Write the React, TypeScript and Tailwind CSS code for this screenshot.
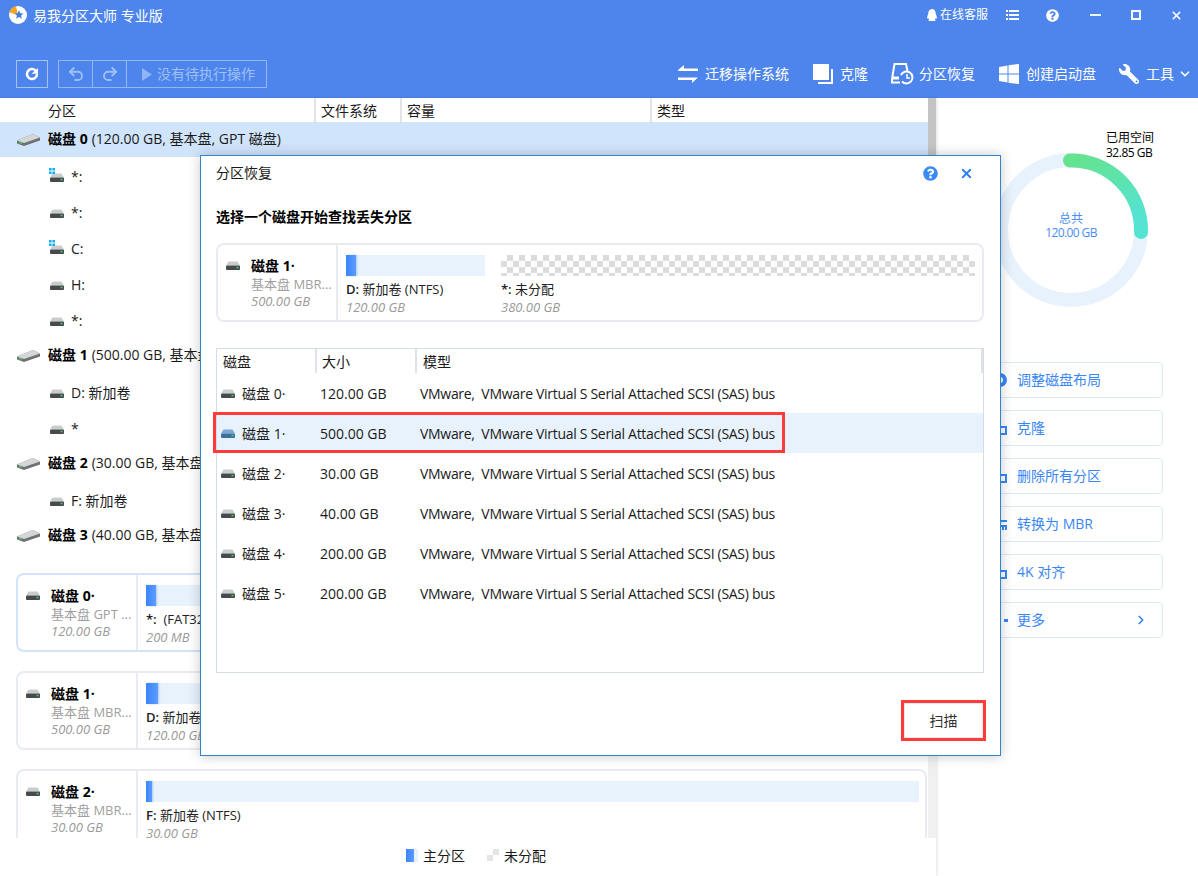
import { FaQq, FaQuestionCircle, FaWrench } from "react-icons/fa";
import { Undo2, Redo2, ChevronDown, ChevronRight, X } from "lucide-react";

type Part = { label: string; rest: string; size: string; width: number; used?: number };

const partitions0 = [
  { name: "*:", win: true },
  { name: "*:" },
  { name: "C:", win: true },
  { name: "H:" },
  { name: "*:" },
];

const dialogDisks = [
  { name: "磁盘 0·", size: "120.00 GB" },
  { name: "磁盘 1·", size: "500.00 GB", selected: true },
  { name: "磁盘 2·", size: "30.00 GB" },
  { name: "磁盘 3·", size: "40.00 GB" },
  { name: "磁盘 4·", size: "200.00 GB" },
  { name: "磁盘 5·", size: "200.00 GB" },
];

function HddIcon({ blue }: { blue?: boolean }) {
  return (
    <svg width="14" height="9" viewBox="0 0 14 10" preserveAspectRatio="none" className="shrink-0">
      <path d="M2.5 0.5h9L14 5H0z" fill={blue ? "#7ba9d6" : "#c9cdd0"} />
      <rect x="0" y="5" width="14" height="5" rx="1" fill={blue ? "#3c6f9e" : "#474a4c"} />
      <rect x="10.5" y="6.5" width="2" height="1.6" fill="#3fdc5a" />
    </svg>
  );
}

function BigDisk() {
  return (
    <svg width="24" height="14" viewBox="0 0 24 14" className="shrink-0">
      <path d="M0 7.5L16 1l7 3.5v3L7 13 0 10.5z" fill="#6f7274" />
      <path d="M0 7.5L16 1l7 3.5L7 10z" fill="#d4d6d8" />
      <rect x="2" y="9" width="3" height="1.5" fill="#49c35f" />
    </svg>
  );
}

function WinBadge() {
  return (
    <svg width="6" height="6" viewBox="0 0 6 6" className="absolute -left-[1px] -top-[5px]">
      <path d="M0 0h2.600v2.600H0zM3.400 0H6v2.600H3.400zM0 3.400h2.600V6H0zM3.400 3.400H6V6H3.400z" fill="#12b0f5" />
    </svg>
  );
}

function DiskRow({ name, info }: { name: string; info: string }) {
  return (
    <div className="ml-4 h-[35px] flex items-center text-[14px] text-[#1a1a1a]">
      <span className="w-8 pl-[1px] flex">
        <BigDisk />
      </span>
      <b className="font-bold text-black pb-[2px]">{name}</b>
      <span className="ml-1 pb-[2px]">{info}</span>
    </div>
  );
}

function PartRow({ name, win }: { name: string; win?: boolean }) {
  return (
    <div className="h-9 flex items-center pl-[50px] text-[14px] text-[#1a1a1a]">
      <span className="relative flex mt-[3px]">
        <HddIcon />
        {win && <WinBadge />}
      </span>
      <span className="ml-[7px]">{name}</span>
    </div>
  );
}

function DiskCard({
  name,
  type,
  size,
  parts,
  active,
  className,
}: {
  name: string;
  type: string;
  size: string;
  parts: Part[];
  active?: boolean;
  className?: string;
}) {
  return (
    <div
      className={`h-[79px] shrink-0 flex rounded-lg border-2 bg-white ${active ? "border-[#d3e3fb]" : "border-[#e8ecf1]"} ${className ?? ""}`}
    >
      <div className="w-[120px] shrink-0 border-r-2 border-[#e8ecf1] pt-3 pl-[8px] flex">
        <div className="pt-[4px] w-[25px]">
          <HddIcon />
        </div>
        <div>
          <div className="h-[18px] leading-[18px] text-[14px] font-bold text-black whitespace-nowrap">{name}</div>
          <div className="h-[18px] leading-[18px] text-[13px] text-[#a0a0a0] whitespace-nowrap">{type}</div>
          <div className="h-[17px] leading-[16px] text-[13px] italic text-[#9a9a9a] whitespace-nowrap">{size}</div>
        </div>
      </div>
      <div className="flex-1 flex gap-4 pl-[8px] pt-[10px]">
        {parts.map((p) => (
          <div key={p.label + p.rest} className="shrink-0" style={{ width: p.width }}>
            {p.used === undefined ? (
              <div className="h-[21px] bg-[repeating-conic-gradient(#dcdcdc_0_25%,#ffffff_0_50%)] bg-[length:12px_12px]" />
            ) : (
              <div className="h-[21px] bg-[#e8f2fd]">
                <div
                  className="h-full bg-gradient-to-r from-[#3a84fb] to-[#5b9cff] shadow-[1px_0_2px_rgba(60,120,220,0.35)]"
                  style={{ width: p.used }}
                />
              </div>
            )}
            <div className="mt-[4px] h-[18px] leading-[18px] text-[13px] text-[#222] whitespace-pre">
              <span className="font-semibold">{p.label}</span>
              {p.rest}
            </div>
            <div className="h-[18px] leading-[18px] text-[13px] italic text-[#9a9a9a]">{p.size}</div>
          </div>
        ))}
      </div>
    </div>
  );
}

function Header() {
  return (
    <div className="h-[98px] shrink-0 bg-[#4e85ec] text-white flex flex-col">
      <div className="h-[30px] flex items-center">
        <svg width="18" height="18" viewBox="0 0 18 18" className="ml-[9px]">
          <circle cx="9" cy="9" r="9" fill="#fff" />
          <path d="M9 9L0.3 6.5A9 9 0 0 1 7 0.2z" fill="#f5a623" />
          <path d="M10 4.2l1.3 3 3.2.3-2.4 2.1.7 3.2-2.8-1.7-2.8 1.7.7-3.2-2.4-2.1 3.2-.3z" fill="#3f7fe0" />
        </svg>
        <span className="ml-[6px] text-[14px]">易我分区大师 专业版</span>
        <FaQq className="ml-auto text-[12px]" />
        <span className="ml-[2px] text-[12px]">在线客服</span>
        <svg width="13" height="10" viewBox="0 0 13 10" className="ml-[18px]" fill="#fff">
          <path d="M0 0h2v2H0zM3 0h10v2H3zM0 4h2v2H0zM3 4h10v2H3zM0 8h2v2H0zM3 8h10v2H3z" />
        </svg>
        <FaQuestionCircle className="ml-[27px] text-[13px]" />
        <span className="ml-[31px] w-[11px] h-[2px] bg-white/90" />
        <span className="ml-[30px] w-[10px] h-[10px] border-2 border-white" />
        <X className="ml-[29px] mr-[15px] w-[13px] h-[13px]" strokeWidth={3} />
      </div>
      <div className="mt-[30px] h-7 flex items-center">
        <div className="ml-4 w-8 h-7 border border-white/50 flex items-center justify-center">
          <svg width="14" height="14" viewBox="0 0 14 14" fill="none">
            <path d="M12 7a5 5 0 1 1-1.6-3.7" stroke="#fff" strokeWidth="2.4" />
            <path d="M6.5 6.8h6.5V1z" fill="#fff" />
          </svg>
        </div>
        <div className="ml-[10px] h-7 flex border border-white/40 text-[#9fc0f6]">
          <div className="w-[34px] flex items-center justify-center border-r border-white/40">
            <Undo2 className="w-[18px] h-[18px]" strokeWidth={2.5} />
          </div>
          <div className="w-[34px] flex items-center justify-center border-r border-white/40">
            <Redo2 className="w-[18px] h-[18px]" strokeWidth={2.5} />
          </div>
          <div className="w-[139px] flex items-center pl-[15px]">
            <svg width="10" height="13" viewBox="0 0 10 13" fill="#8fb5f5">
              <path d="M0 0l10 6.5L0 13z" />
            </svg>
            <span className="ml-[5px] pb-[2px] text-[14px]">没有待执行操作</span>
          </div>
        </div>
        <div className="ml-auto mr-[6px] flex items-center text-[14px]">
          <div className="flex items-center gap-[7px]">
            <svg width="20" height="20" viewBox="0 0 20 20" fill="#fff">
              <path d="M0 6l6-5v3.5h14V7H0zM20 13.5l-6 5.500V16H0v-2.500h20z" />
            </svg>
            <span className="pb-[2px]">迁移操作系统</span>
          </div>
          <div className="ml-[24px] flex items-center gap-[7px]">
            <svg width="20" height="20" viewBox="0 0 20 20" fill="#fff">
              <path d="M0 0h16v16H0z" />
              <path d="M5 18h13V5h2v15H5z" />
            </svg>
            <span className="pb-[2px]">克隆</span>
          </div>
          <div className="ml-[23px] flex items-center gap-[5px]">
            <svg width="23" height="22" viewBox="0 0 23 22" fill="none" stroke="#fff" strokeWidth="2">
              <path d="M1 16L3.500 1h11.500l1.500 7" />
              <path d="M1 16v3.500h8" />
              <path d="M1 15h7" strokeWidth="3" />
              <path d="M10 12a6 6 0 1 1 1 6.500" />
              <path d="M16 11v4h3" strokeWidth="1.500" />
            </svg>
            <span className="pb-[2px]">分区恢复</span>
          </div>
          <div className="ml-[24px] flex items-center gap-[7px]">
            <svg width="20" height="20" viewBox="0 0 20 20" fill="#fff">
              <path d="M0 3l8.500-1.500v8H0zM9.500 1.300L20 0v9.500H9.500zM0 10.500h8.500v8L0 17zM9.500 10.500H20V20L9.500 18.700z" />
            </svg>
            <span className="pb-[2px]">创建启动盘</span>
          </div>
          <div className="ml-[23px] flex items-center">
            <FaWrench className="w-5 h-5 -scale-x-100" />
            <span className="ml-[7px] pb-[2px]">工具</span>
            <ChevronDown className="ml-[4px] w-[14px] h-[14px]" strokeWidth={3} />
          </div>
        </div>
      </div>
    </div>
  );
}

function RecoverDialog() {
  return (
    <div className="absolute left-[200px] top-[155px] w-[801px] h-[601px] bg-white border border-[#2f86d0] shadow-[0_0_12px_rgba(0,0,0,0.22)] px-[15px] text-[14px] text-[#1a1a1a]">
      <div className="h-[35px] flex items-center">
        <span className="pb-[2px]">分区恢复</span>
        <FaQuestionCircle className="ml-auto text-[15px] text-[#3a8bf8]" />
        <X className="ml-[21px] mr-[11px] w-[15px] h-[15px] text-[#2f80f0]" strokeWidth={3} />
      </div>
      <div className="mt-[16px] h-5 leading-5 font-bold text-black">选择一个磁盘开始查找丢失分区</div>
      <DiskCard
        className="mt-[16px] w-[768px]"
        name="磁盘 1·"
        type="基本盘 MBR..."
        size="500.00 GB"
        parts={[
          { label: "D:", rest: " 新加卷 (NTFS)", size: "120.00 GB", width: 139, used: 10 },
          { label: "*:", rest: " 未分配", size: "380.00 GB", width: 474 },
        ]}
      />
      <div className="mt-[26px] w-[768px] h-[325px] border border-[#d3dce8]">
        <div className="h-6 flex leading-[26px]">
          <div className="w-[100px] pl-[6px] border-r-2 border-[#dfe3e8]">磁盘</div>
          <div className="w-[100px] pl-[5px] border-r-2 border-[#dfe3e8]">大小</div>
          <div className="flex-1 pl-[6px] border-r-2 border-[#dfe3e8]">模型</div>
        </div>
        {dialogDisks.map((d) => (
          <div key={d.name} className={`relative h-10 flex items-center ${d.selected ? "bg-[#e8f2fc]" : ""}`}>
            <div className="w-[99px] pl-[4px] flex items-center gap-[7px]">
              <HddIcon blue={d.selected} />
              <span>{d.name}</span>
            </div>
            <div className="w-[100px] pl-[4px]">{d.size}</div>
            <div className="pl-[4px] whitespace-pre tracking-[-0.3px]">
              VMware,  VMware Virtual S Serial Attached SCSI (SAS) bus
            </div>
            {d.selected && (
              <div className="absolute -left-[4px] -top-[1px] w-[572px] h-[41px] border-[3px] border-[#ff3b3b]" />
            )}
          </div>
        ))}
      </div>
      <div className="relative mt-[27px] ml-auto w-[85px] h-[41px] -mr-px border-[3px] border-[#ff3b3b]">
        <div className="h-full border border-[#e8e8e8] flex items-center justify-center text-[#333]">扫描</div>
      </div>
    </div>
  );
}

const actions = [
  { label: "调整磁盘布局", icon: <circle cx="8" cy="8" r="5" fill="none" stroke="#3a86f5" strokeWidth="4" /> },
  { label: "克隆", icon: <path d="M2 2h6v5h6v7H7V9H2z" fill="none" stroke="#3a86f5" strokeWidth="2" /> },
  { label: "删除所有分区", icon: <path d="M2 2h6v5h6v7H7V9H2z" fill="none" stroke="#3a86f5" strokeWidth="2" /> },
  { label: "转换为 MBR", icon: <path d="M1 5h14M1 10h14M14 10v4M11 10v4" fill="none" stroke="#3a86f5" strokeWidth="2" /> },
  { label: "4K 对齐", icon: <path d="M2 2h6v5h6v7H7V9H2z" fill="none" stroke="#3a86f5" strokeWidth="2" /> },
  { label: "更多", icon: <path d="M0 7h3v3H0zM6 7h3v3H6zM12 7h4v3h-4z" fill="#3a86f5" /> },
];

function RightPanel() {
  return (
    <div className="flex-1 pl-[43px] pt-[55px]">
      <div className="relative ml-[15px] w-[154px] h-[154px]">
        <svg width="154" height="154" viewBox="0 0 154 154">
          <defs>
            <linearGradient id="used" x1="0" y1="0" x2="0.4" y2="1">
              <stop offset="0" stopColor="#65e38f" />
              <stop offset="1" stopColor="#55e3d2" />
            </linearGradient>
          </defs>
          <circle cx="77" cy="77" r="70" fill="none" stroke="#e8f2fd" strokeWidth="14" />
          <path d="M76 7.500A70 70 0 0 1 147 79" fill="none" stroke="url(#used)" strokeWidth="14" strokeLinecap="round" />
        </svg>
        <div className="absolute left-[112px] -top-[23px] text-[12px] leading-[15px] text-black whitespace-nowrap">
          <div>已用空间</div>
          <div className="tracking-[-0.5px]">32.85 GB</div>
        </div>
        <div className="absolute inset-0 pb-[9px] flex flex-col items-center justify-center text-[12px] leading-[14px] text-[#4a8df5]">
          <div>总共</div>
          <div className="tracking-[-0.6px]">120.00 GB</div>
        </div>
      </div>
      <div className="mt-[55px] w-[184px] flex flex-col gap-3">
        {actions.map((a) => (
          <div
            key={a.label}
            className="h-9 flex items-center pl-[12px] pr-[14px] rounded-sm border border-[#dbe8fb] text-[14px] text-[#3a86f5]"
          >
            <svg width="16" height="16" viewBox="0 0 16 16">
              {a.icon}
            </svg>
            <span className="ml-[9px] pb-[2px]">{a.label}</span>
            {a.label === "更多" && <ChevronRight className="ml-auto w-[14px] h-[14px]" strokeWidth={3} />}
          </div>
        ))}
      </div>
    </div>
  );
}

export default function App() {
  return (
    <div className="relative w-[1198px] h-[876px] overflow-hidden bg-white flex flex-col font-['Open_Sans','Noto_Sans_CJK_SC',sans-serif]">
      <Header />
      <div className="flex-1 flex min-h-0">
        <div className="w-[936px] shrink-0 flex flex-col shadow-[1px_0_3px_rgba(0,0,0,0.12)]">
          <div className="h-[740px] flex">
            <div className="w-[928px] shrink-0 overflow-hidden">
              <div className="h-6 flex text-[14px] text-[#1a1a1a] leading-[26px]">
                <div className="w-[316px] pl-12 border-r-2 border-[#e4e4e4]">分区</div>
                <div className="w-[86px] pl-[5px] border-r-2 border-[#e4e4e4]">文件系统</div>
                <div className="w-[250px] pl-[5px] border-r-2 border-[#e4e4e4]">容量</div>
                <div className="pl-[5px]">类型</div>
              </div>
              <div className="bg-[#d0e4fb]">
                <DiskRow name="磁盘 0" info="(120.00 GB, 基本盘, GPT 磁盘)" />
              </div>
              <div className="mt-px">
                {partitions0.map((p, i) => (
                  <PartRow key={i} name={p.name} win={p.win} />
                ))}
              </div>
              <DiskRow name="磁盘 1" info="(500.00 GB, 基本盘, MBR 磁盘)" />
              <div className="mt-px">
                <PartRow name="D: 新加卷" />
                <PartRow name="*" />
              </div>
              <DiskRow name="磁盘 2" info="(30.00 GB, 基本盘, MBR 磁盘)" />
              <div className="mt-px">
                <PartRow name="F: 新加卷" />
              </div>
              <DiskRow name="磁盘 3" info="(40.00 GB, 基本盘, MBR 磁盘)" />
              <div className="mt-5 ml-4 w-[911px] flex flex-col gap-[19px]">
                <DiskCard
                  active
                  name="磁盘 0·"
                  type="基本盘 GPT ..."
                  size="120.00 GB"
                  parts={[{ label: "*:", rest: "  (FAT32)", size: "200 MB", width: 773, used: 10 }]}
                />
                <DiskCard
                  name="磁盘 1·"
                  type="基本盘 MBR..."
                  size="500.00 GB"
                  parts={[{ label: "D:", rest: " 新加卷 (NTFS)", size: "120.00 GB", width: 773, used: 12 }]}
                />
                <DiskCard
                  name="磁盘 2·"
                  type="基本盘 MBR..."
                  size="30.00 GB"
                  parts={[{ label: "F:", rest: " 新加卷 (NTFS)", size: "30.00 GB", width: 773, used: 6 }]}
                />
              </div>
            </div>
            <div className="flex-1 bg-[#f0f0f0]">
              <div className="h-[300px] bg-[#c4c4c4]" />
            </div>
          </div>
          <div className="flex-1 pb-[4px] flex items-center pl-[406px] text-[14px] text-[#1a1a1a]">
            <span className="w-3 h-[13px] bg-[#e8f2fd] flex">
              <span className="w-2 bg-gradient-to-r from-[#3a84fb] to-[#5b9cff]" />
            </span>
            <span className="ml-[5px]">主分区</span>
            <span className="ml-[22px] w-3 h-3 bg-[repeating-conic-gradient(#e4e4e4_0_25%,#ffffff_0_50%)] bg-[length:12px_12px]" />
            <span className="ml-[5px]">未分配</span>
          </div>
        </div>
        <RightPanel />
      </div>
      <RecoverDialog />
    </div>
  );
}
